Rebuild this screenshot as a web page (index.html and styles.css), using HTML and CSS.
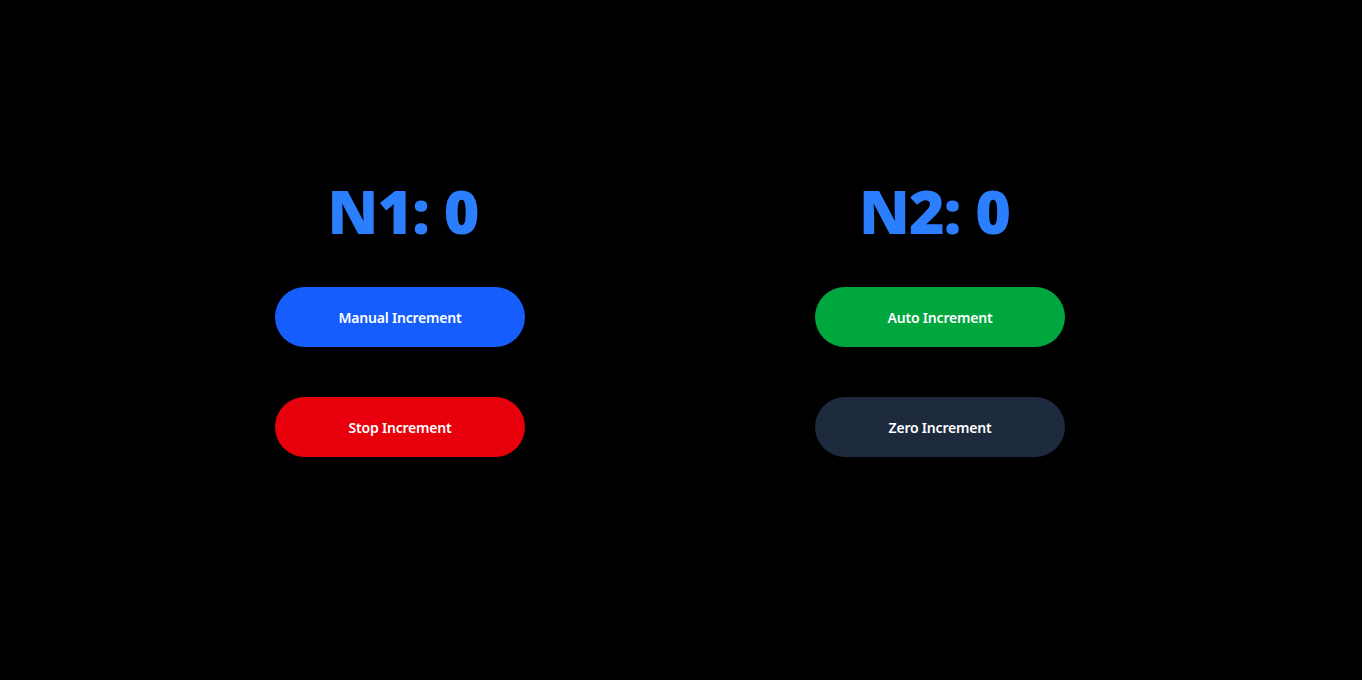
FILE: index.html
```html
<!DOCTYPE html>
<html>
<head>
<meta charset="utf-8">
<link rel="stylesheet" href="styles.css">
</head>
<body>
<main class="page">
  <section class="col">
    <h1 class="count count-left">N1: 0</h1>
    <button class="btn btn-blue">Manual Increment</button>
    <button class="btn btn-red">Stop Increment</button>
  </section>
  <section class="col">
    <h1 class="count count-right">N2: 0</h1>
    <button class="btn btn-green">Auto Increment</button>
    <button class="btn btn-slate">Zero Increment</button>
  </section>
</main>
</body>
</html>
```
FILE: styles.css
```css
html, body {
  margin: 0;
  padding: 0;
  background: #000;
  height: 100%;
}
body {
  font-family: "Noto Sans", "Open Sans", sans-serif;
}
.page {
  display: flex;
  justify-content: center;
  gap: 290px;
  padding-right: 22px;
  padding-top: 173px;
  box-sizing: border-box;
  height: 100%;
}
.col {
  width: 250px;
  display: flex;
  flex-direction: column;
  align-items: center;
}
.count {
  margin: 0 0 38px;
  font-size: 61px;
  line-height: 76px;
  font-weight: 900;
  color: #2b7fff;
  letter-spacing: -1px;
  white-space: nowrap;
}
.count-left { margin-left: 6px; }
.count-right { margin-right: 11px; }
.btn {
  width: 250px;
  height: 60px;
  border: none;
  border-radius: 30px;
  color: #fff;
  font-family: "Noto Sans", "Open Sans", sans-serif;
  font-size: 14px;
  font-weight: 600;
  letter-spacing: -0.2px;
  margin-bottom: 50px;
  padding: 0;
}
.btn-blue { background: #155dfc; }
.btn-red { background: #e7000b; }
.btn-green { background: #00a63e; }
.btn-slate { background: #1d293d; }
```
